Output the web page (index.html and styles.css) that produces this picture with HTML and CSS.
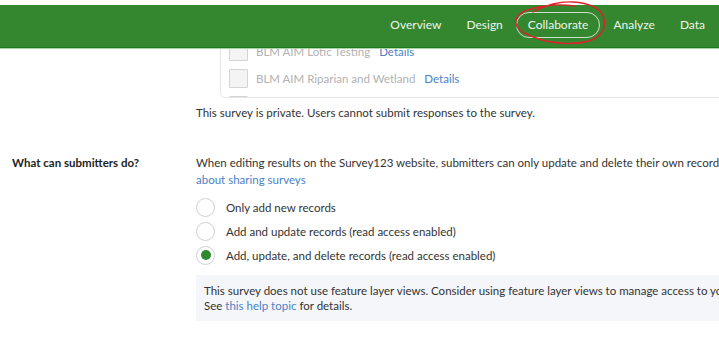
FILE: index.html
```html
<!DOCTYPE html>
<html>
<head>
<meta charset="utf-8">
<link rel="stylesheet" href="styles.css">
</head>
<body>
<header class="topbar">
  <nav class="nav">
    <a class="nav-item">Overview</a>
    <a class="nav-item">Design</a>
    <a class="nav-item active">Collaborate</a>
    <a class="nav-item">Analyze</a>
    <a class="nav-item">Data</a>
  </nav>
  <svg class="scribble" width="100" height="48" viewBox="0 0 100 48">
    <path d="M20 11 C32 4 48 0 60 1 C74 2 86 5 90 15 C94 25 90 35 76 40 C62 44 42 43 26 38 C10 33 1 27 3 19 C5 11 17 7 33 5 C45 3 55 4 62 5" fill="none" stroke="#e0202a" stroke-width="1.4" stroke-linecap="round"/>
  </svg>
</header>
<main class="content">
  <section class="row row-layers">
    <div class="row-label"></div>
    <div class="row-body">
      <div class="layer-card">
        <div class="layer-item"><span class="checkbox"></span><span class="layer-name">BLM AIM Lotic Testing</span><a class="link">Details</a></div>
        <div class="layer-item"><span class="checkbox"></span><span class="layer-name">BLM AIM Riparian and Wetland</span><a class="link">Details</a></div>
        <div class="layer-item"><span class="checkbox"></span></div>
      </div>
      <p class="note">This survey is private. Users cannot submit responses to the survey.</p>
    </div>
  </section>
  <section class="row row-submit">
    <div class="row-label">What can submitters do?</div>
    <div class="row-body">
      <p class="desc">When editing results on the Survey123 website, submitters can only update and delete their own records. Learn more<br><a class="link">about sharing surveys</a></p>
      <div class="radios">
        <label class="radio"><span class="radio-dot"></span>Only add new records</label>
        <label class="radio"><span class="radio-dot"></span>Add and update records (read access enabled)</label>
        <label class="radio"><span class="radio-dot checked"></span>Add, update, and delete records (read access enabled)</label>
      </div>
      <div class="info">This survey does not use feature layer views. Consider using feature layer views to manage access to your survey data.<br>See <a class="link">this help topic</a> for details.</div>
    </div>
  </section>
</main>
</body>
</html>
```
FILE: styles.css
```css
html, body {
  margin: 0;
  padding: 0;
  background: #fff;
  overflow: hidden;
}
body {
  width: 719px;
  height: 340px;
  font-family: "Lato", "Open Sans", sans-serif;
  font-size: 11.5px;
  color: #333;
  padding-top: 5px;
  box-sizing: border-box;
}
.topbar {
  position: relative;
  z-index: 2;
  height: 42px;
  background: #34862f;
  border-bottom: 1px solid #1f7a1f;
  box-shadow: 0 1px 0 #a9d3a5;
  display: flex;
  justify-content: flex-end;
  align-items: center;
  padding-right: 2px;
}
.nav {
  display: flex;
  align-items: center;
  gap: 1px;
  margin-bottom: 2px;
}
.nav-item {
  color: #eef5ec;
  font-size: 12px;
  padding: 0 11px;
  height: 24px;
  line-height: 24px;
  border: 1px solid transparent;
  border-radius: 14px;
}
.nav-item.active {
  border-color: rgba(255,255,255,0.75);
}
.scribble {
  position: absolute;
  left: 513px;
  top: -4px;
}
.content {
  position: relative;
  z-index: 1;
  margin-top: -7px;
  overflow: hidden;
}
.row {
  display: grid;
  grid-template-columns: 184px 1fr;
  padding-left: 12px;
}
.row-body {
  min-width: 0;
}
.row-label {
  font-weight: bold;
  color: #1e1e1e;
  line-height: 17px;
}
.layer-card {
  margin-left: 24px;
  height: 55px;
  overflow: hidden;
  border: 1px solid #e6e6e6;
  border-top: none;
  border-right: none;
  border-radius: 0 0 0 5px;
  padding-left: 8px;
  padding-top: 1px;
}
.layer-item {
  display: flex;
  align-items: center;
  height: 18px;
  margin-bottom: 9px;
  gap: 8px;
}
.checkbox {
  width: 17px;
  height: 17px;
  border: 1px solid #d4d4d4;
  background: #f4f4f4;
  border-radius: 1px;
  flex: none;
}
.layer-name {
  color: #b1b1b1;
}
.link {
  color: #4b82c8;
}
.layer-name + .link {
  margin-left: 1px;
}
.note {
  margin: 6px 0 0;
  line-height: 17px;
}
.row-submit {
  margin-top: 33px;
}
.desc {
  margin: 0;
  line-height: 17px;
  white-space: nowrap;
}
.radios {
  display: flex;
  flex-direction: column;
  gap: 4px;
  margin-top: 9px;
}
.radio {
  display: flex;
  align-items: center;
  gap: 11px;
  height: 20px;
  color: #333;
}
.radio-dot {
  width: 17px;
  height: 17px;
  border: 1px solid #d0d0d0;
  border-radius: 50%;
  background: #fff;
  display: flex;
  align-items: center;
  justify-content: center;
  flex: none;
}
.radio-dot.checked::after {
  content: "";
  width: 10px;
  height: 10px;
  border-radius: 50%;
  background: #2e8a2e;
}
.info {
  margin-top: 10px;
  background: #f5f6fa;
  padding: 8px 8px 8px;
  line-height: 15px;
  white-space: nowrap;
}
```
